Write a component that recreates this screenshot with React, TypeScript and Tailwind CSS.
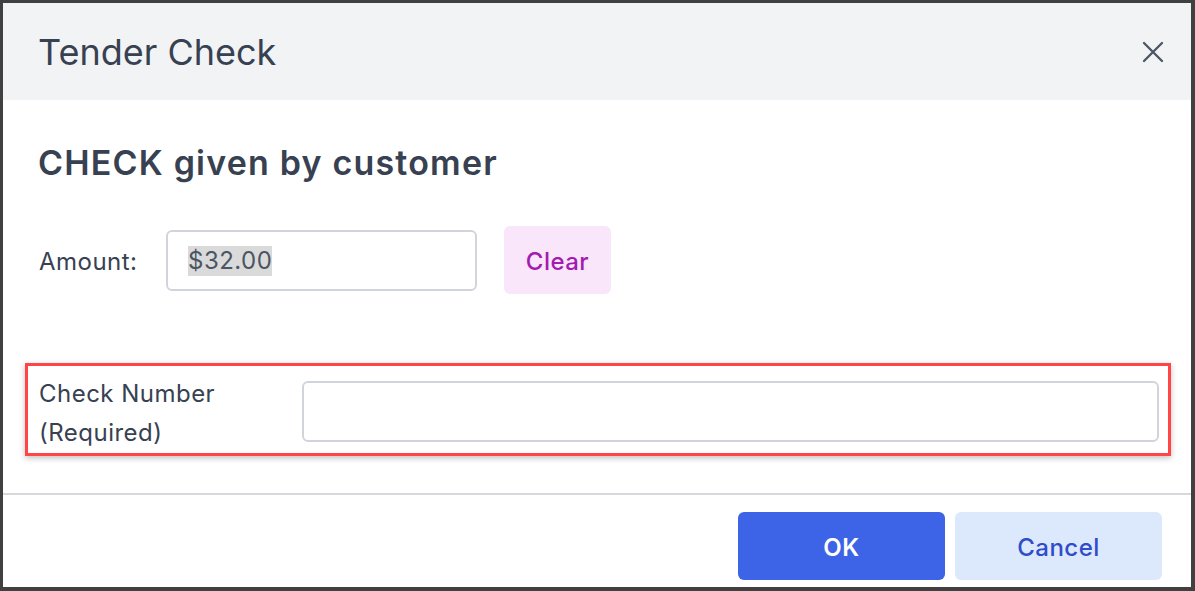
import { useState } from "react";

const font = { fontFamily: "Inter, 'Noto Sans', sans-serif" };

const CloseIcon = () => (
  <svg width="24" height="24" viewBox="0 0 24 24" fill="none">
    <path
      d="M3 3L21 21M21 3L3 21"
      stroke="#4b5563"
      strokeWidth="2.3"
      strokeLinecap="round"
    />
  </svg>
);

export default function App() {
  const [checkNo, setCheckNo] = useState("");

  return (
    <div
      className="w-[1195px] h-[591px] bg-[#404040] pt-[3px] pl-[3px] pr-[4px] pb-[4px]"
      style={font}
    >
      <div className="w-full h-full bg-white flex flex-col">
        {/* header */}
        <div className="h-[97px] bg-[#f2f3f5] flex items-center justify-between pl-[35px] pr-[26px]">
          <h1 className="text-[36px] text-[#374151] leading-none">
            Tender Check
          </h1>
          <button className="p-0">
            <CloseIcon />
          </button>
        </div>

        {/* body */}
        <div className="flex-1 flex flex-col pt-[43px]">
          <h2 className="pl-[35px] text-[34px] leading-[40px] font-semibold tracking-[0.035em] text-[#374151]">
            CHECK given by customer
          </h2>

          <div className="flex items-center pl-[36px] mt-[43px]">
            <span className="text-[24px] tracking-[0.02em] text-[#374151] w-[127px] pt-[3px]">
              Amount:
            </span>
            <div className="w-[311px] h-[61px] border-2 border-[#d1d5db] rounded-md flex items-center pl-[20px] pt-[2px]">
              <span className="text-[24px] tracking-[0.02em] text-[#4b5563] bg-[#dadada] leading-[30px]">
                $32.00
              </span>
            </div>
            <button className="ml-[27px] w-[107px] h-[68px] pt-[3px] rounded-md bg-[#f9e6fb] text-[#a21caf] text-[24px] tracking-[0.02em] font-medium">
              Clear
            </button>
          </div>

          <div className="mt-[69px] ml-[22px] mr-[20px] border-[3px] border-[#ff4545] shadow-[0_2px_6px_rgba(0,0,0,0.25)] flex pl-[11px] pr-[9px] pt-[15px] pb-[11px]">
            <label className="w-[263px] h-[61px] -mt-[7px] text-[24px] tracking-[0.02em] leading-[39px] text-[#374151]">
              Check Number
              <br />
              (Required)
            </label>
            <input
              value={checkNo}
              onChange={(e) => setCheckNo(e.target.value)}
              className="flex-1 h-[61px] border-2 border-[#d1d5db] rounded-md outline-none px-4 text-[22px]"
            />
          </div>
        </div>

        {/* footer */}
        <div className="h-[94px] border-t-2 border-[#d6d8dc] flex justify-end items-start pt-[17px] pr-[29px] gap-[10px]">
          <button className="w-[207px] h-[68px] pt-[3px] rounded-md bg-[#3d63e6] text-white text-[24px] tracking-[0.02em] font-semibold">
            OK
          </button>
          <button className="w-[207px] h-[68px] pt-[3px] rounded-md bg-[#dce8fb] text-[#2f4ccb] text-[24px] tracking-[0.02em] font-medium">
            Cancel
          </button>
        </div>
      </div>
    </div>
  );
}
